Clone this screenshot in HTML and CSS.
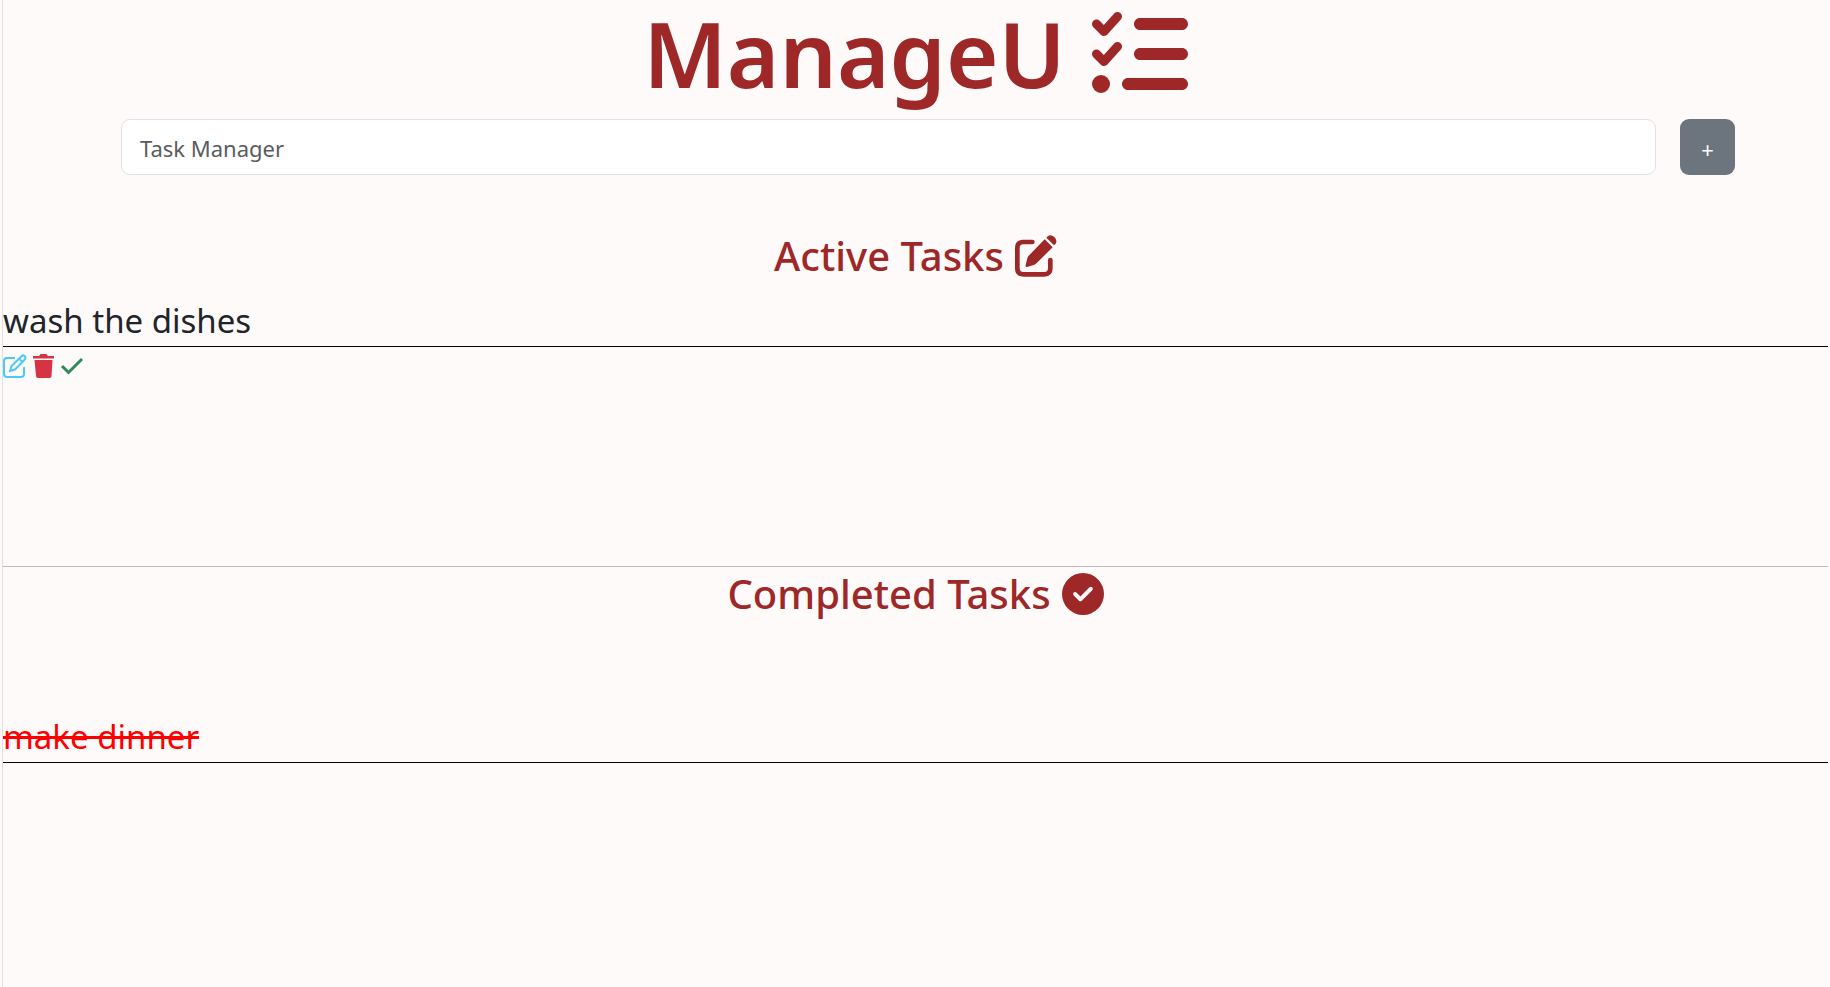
FILE: index.html
```html
<!DOCTYPE html>
<html lang="en">
<head>
<meta charset="utf-8">
<meta name="viewport" content="width=device-width, initial-scale=1">
<title>ManageU</title>
<link rel="stylesheet" href="styles.css">
</head>
<body>
<main class="app">
  <h1 class="title"><span>ManageU</span>
    <svg class="title-icon" viewBox="0 0 512 512" aria-hidden="true"><path d="M152.100 38.200c9.900 8.900 10.700 24 1.800 33.900l-72 80c-4.400 4.900-10.600 7.800-17.200 7.900s-12.900-2.400-17.600-7L7 113C-2.300 103.600-2.300 88.400 7 79s24.600-9.400 33.900 0l22.100 22.100 55.100-61.200c8.900-9.900 24-10.700 34-1.700zm0 160c9.900 8.900 10.700 24 1.800 33.900l-72 80c-4.400 4.900-10.600 7.800-17.200 7.900s-12.900-2.400-17.600-7L7 273c-9.400-9.400-9.400-24.600 0-33.900s24.600-9.400 33.900 0l22.100 22.100 55.100-61.200c8.900-9.900 24-10.700 34-1.800zM224 96c0-17.700 14.300-32 32-32h224c17.700 0 32 14.300 32 32s-14.300 32-32 32H256c-17.700 0-32-14.300-32-32zm0 160c0-17.700 14.300-32 32-32h224c17.700 0 32 14.300 32 32s-14.300 32-32 32H256c-17.700 0-32-14.300-32-32zm-64 160c0-17.700 14.300-32 32-32h288c17.700 0 32 14.300 32 32s-14.300 32-32 32H192c-17.700 0-32-14.300-32-32zM48 368a48 48 0 1 1 0 96 48 48 0 1 1 0-96z"/></svg>
  </h1>
  <form class="entry">
    <input class="entry-input" type="text" placeholder="Task Manager" aria-label="Task Manager">
    <button class="entry-add" type="button">+</button>
  </form>
  <section class="active">
    <h2 class="heading"><span>Active Tasks</span>
      <svg class="heading-icon" viewBox="0 0 126 126" aria-hidden="true"><path d="M52 21H25Q7 21 7 39v61q0 18 18 18h63q18 0 18-18V75" fill="none" stroke="currentColor" stroke-width="14" stroke-linecap="round"/><path d="M36 96q-6 0-4-6l5-20q1-5 4-8l48-49 24 24-50 49q-3 3-7 4zM94 8l5-5q9-6 19 3 10 10 4 20l-5 5z"/></svg>
    </h2>
    <p class="task">wash the dishes</p>
    <div class="actions">
      <button class="action edit" type="button" aria-label="Edit"><svg viewBox="0 0 24 24" aria-hidden="true"><path d="M12 4H4a3 3 0 0 0-3 3v13a3 3 0 0 0 3 3h14a3 3 0 0 0 3-3v-7M18.500 2.200a2.300 2.300 0 0 1 3.300 3.300L12 15.500l-5 1.500 1.500-5zM16 4.500l3.500 3.500"/></svg></button>
      <button class="action delete" type="button" aria-label="Delete"><svg viewBox="0 0 24 24" aria-hidden="true"><path d="M2 2h6l1.500-2h6L17 2h6v2.500H2zM3.500 6h18l-1 16q0 2-2 2H7q-2 0-2-2z"/></svg></button>
      <button class="action done" type="button" aria-label="Complete"><svg viewBox="0 0 24 24" aria-hidden="true"><path d="m3 12 6.500 6.500L23 5"/></svg></button>
    </div>
  </section>
  <section class="completed">
    <h2 class="heading"><span>Completed Tasks</span>
      <svg class="heading-icon" viewBox="0 0 512 512" aria-hidden="true"><path d="M256 512a256 256 0 1 0 0-512 256 256 0 1 0 0 512zM369 209 241 337c-9.400 9.400-24.600 9.400-33.900 0l-64-64c-9.400-9.400-9.400-24.600 0-33.900s24.600-9.400 33.900 0l47 47L335 175c9.400-9.400 24.600-9.400 33.900 0s9.400 24.600 0 33.900z"/></svg>
    </h2>
    <p class="task task-done">make dinner</p>
  </section>
</main>
</body>
</html>
```
FILE: styles.css
```css
* { box-sizing: border-box; }
body { margin: 0; background: #fffafa; color: #212529; font-family: "Noto Sans", "Open Sans", sans-serif; }
.app { min-height: 100vh; margin: 0 2px; border-left: 1px solid #dee2e6; }
.title { display: flex; justify-content: center; align-items: center; gap: 26px; margin: 0; color: #9e2828; font-size: 90px; font-weight: 600; line-height: 107px; }
.title-icon { width: 96px; height: 96px; fill: currentColor; }
.entry { display: flex; gap: 24px; margin: 12px 93px 0 118px; }
.entry-input { flex: 1; min-width: 0; height: 56px; padding: 2px 18px 0; border: 1px solid #dee2e6; border-radius: 9px; background: #fff; font: 22px "Noto Sans", sans-serif; }
.entry-input::placeholder { color: #595c5f; opacity: 1; }
.entry-add { width: 55px; height: 56px; padding: 3px 0 0; border: 0; border-radius: 9px; background: #6c757d; color: #fff; font: 22px "Noto Sans", sans-serif; }
.active { height: 391px; padding-top: 54px; }
.heading { display: flex; justify-content: center; align-items: center; gap: 11px; margin: 0; color: #9e2828; font-size: 40px; font-weight: 500; line-height: 53px; }
.heading-icon { width: 42px; height: 42px; fill: currentColor; }
.task { margin: 14px 0 0; border-bottom: 1px solid #000; font-size: 33px; line-height: 50px; }
.actions { display: flex; gap: 4px; padding-top: 7px; }
.action { width: 24px; height: 24px; padding: 0; border: 0; background: none; }
.action svg { display: block; width: 24px; height: 24px; }
.edit svg, .done svg { fill: none; stroke: #4dc9f6; stroke-width: 2; }
.done svg { stroke: #2e8b57; stroke-width: 3; }
.delete svg { fill: #d63343; }
.completed { border-top: 1px solid #c0bcbc; }
.task-done { margin-top: 92px; color: #f00; text-decoration: line-through; }
```
